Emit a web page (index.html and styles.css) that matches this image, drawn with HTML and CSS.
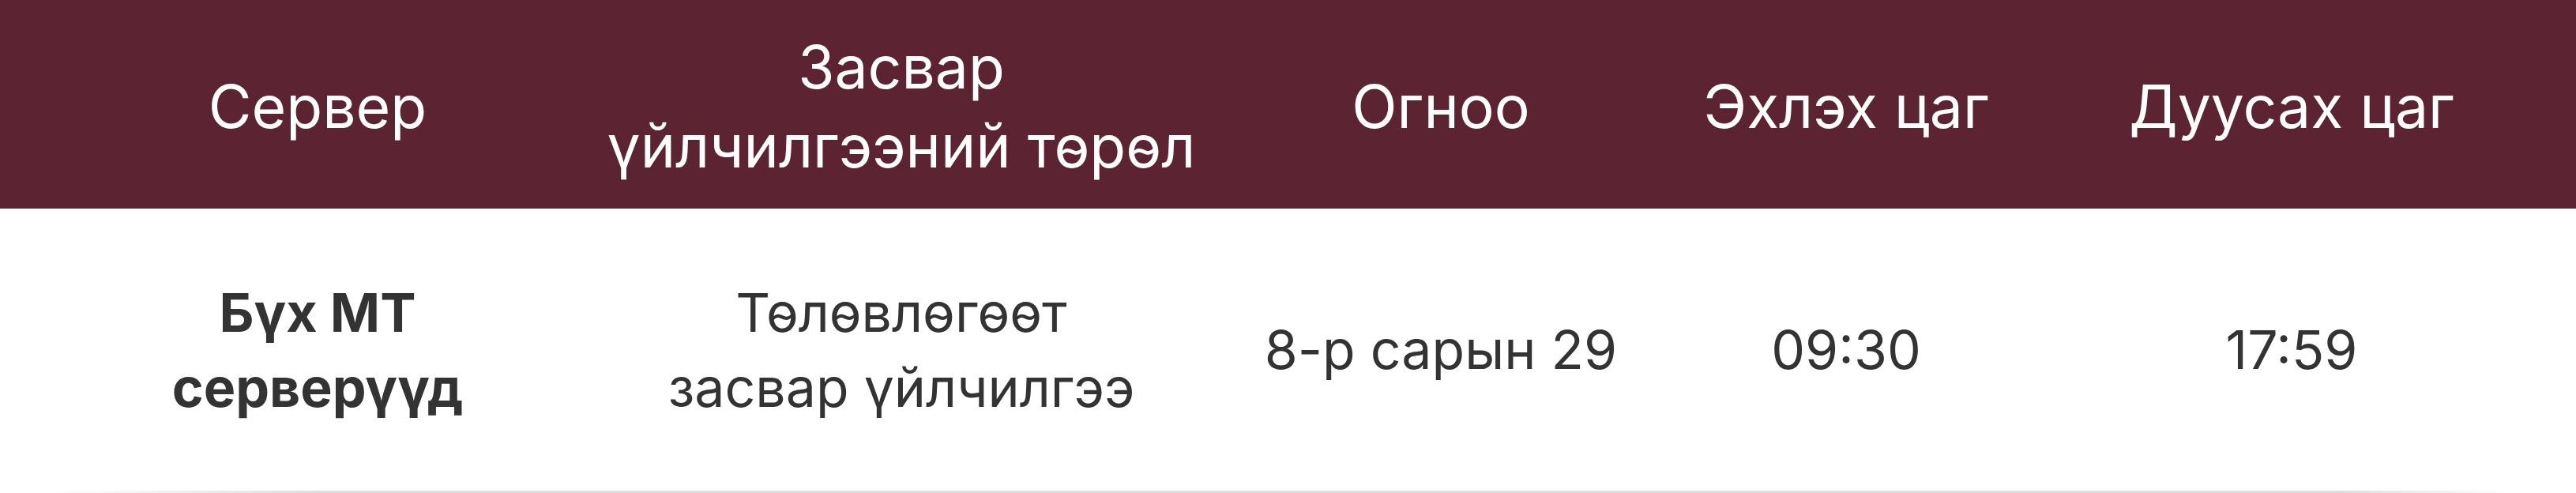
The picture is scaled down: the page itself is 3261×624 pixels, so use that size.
FILE: index.html
```html
<!DOCTYPE html>
<html lang="mn">
<head>
<meta charset="utf-8">
<title>Засвар үйлчилгээ</title>
<link rel="stylesheet" href="styles.css">
</head>
<body>
<div class="table">
  <div class="row head">
    <div class="cell">Сервер</div>
    <div class="cell">Засвар<br>үйлчилгээний төрөл</div>
    <div class="cell">Огноо</div>
    <div class="cell">Эхлэх цаг</div>
    <div class="cell">Дуусах цаг</div>
  </div>
  <div class="row body">
    <div class="cell bold">Бүх МТ<br>серверүүд</div>
    <div class="cell">Төлөвлөгөөт<br>засвар үйлчилгээ</div>
    <div class="cell">8-р сарын 29</div>
    <div class="cell">09:30</div>
    <div class="cell">17:59</div>
  </div>
  <div class="rule"></div>
</div>
</body>
</html>
```
FILE: styles.css
```css
html, body {
  margin: 0;
  padding: 0;
  background: #ffffff;
}
body {
  font-family: Inter, "Noto Sans", "DejaVu Sans", sans-serif;
}
.table {
  width: 3261px;
}
.row {
  display: grid;
  grid-template-columns: 730px 748px 618px 408px 720px;
  padding-left: 37px;
  align-items: center;
  box-sizing: border-box;
}
.head {
  background: #5c2333;
  color: #ffffff;
  height: 264px;
  padding-top: 6px;
  font-size: 75px;
  line-height: 100px;
}
.body {
  color: #333333;
  height: 357px;
  font-size: 68px;
  line-height: 95px;
}
.cell {
  text-align: center;
  white-space: nowrap;
}
.bold {
  font-weight: 700;
}
.rule {
  height: 3px;
  background: linear-gradient(90deg, rgba(221,221,221,0) 60px, #dddddd 420px, #dddddd 2950px, rgba(221,221,221,0) 3180px);
}
```
